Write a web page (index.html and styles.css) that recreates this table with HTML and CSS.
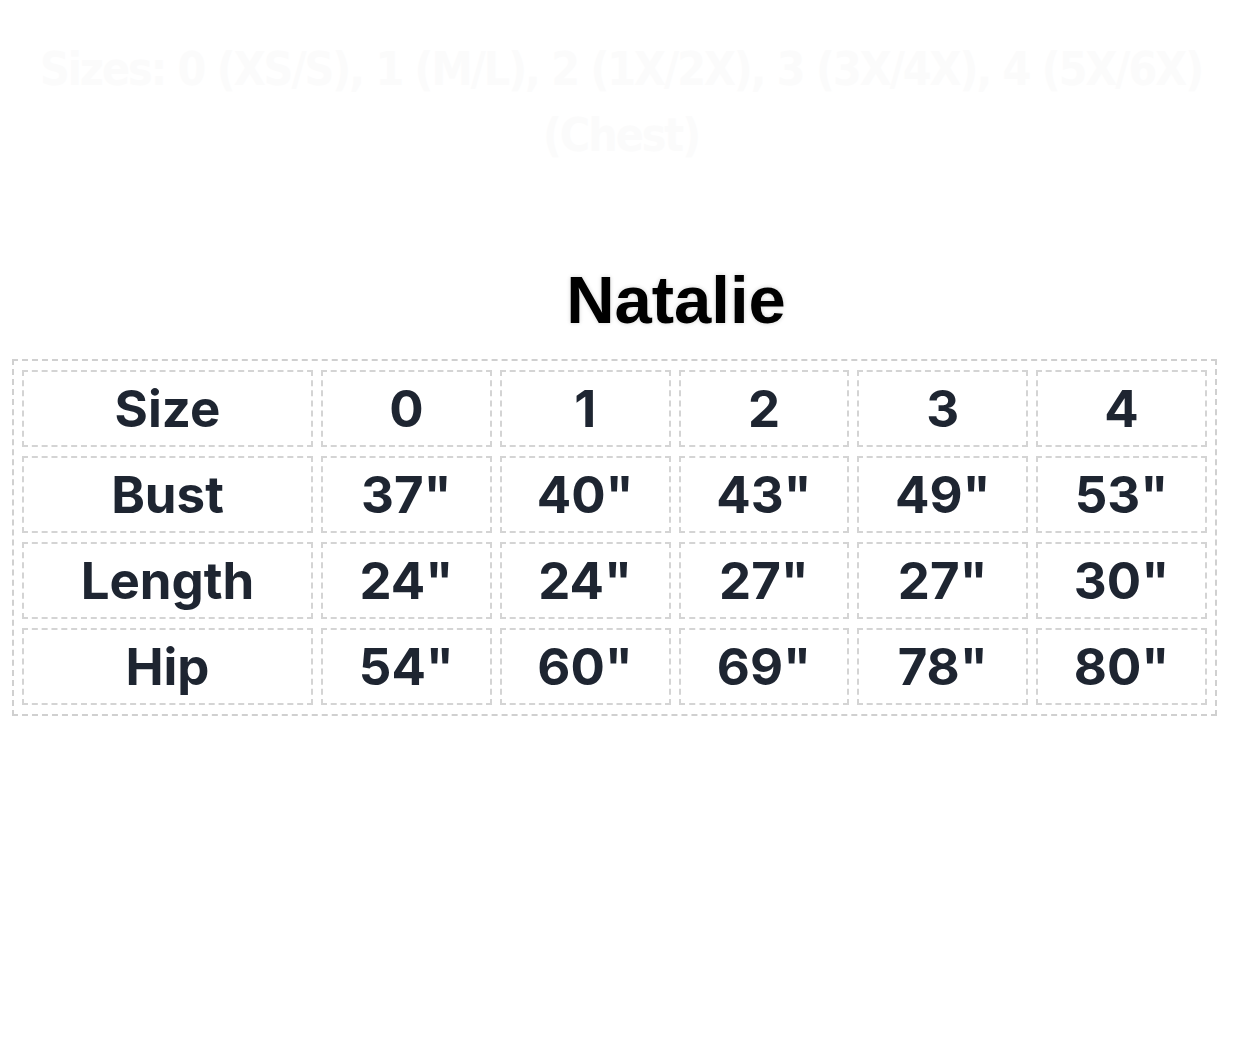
FILE: index.html
```html
<!DOCTYPE html>
<html lang="en">
<head>
<meta charset="utf-8">
<title>Natalie size chart</title>
<link rel="stylesheet" href="styles.css">
</head>
<body>
<div class="page">
  <div class="ghost">
    <div class="ghost-line">Sizes: 0 (XS/S), 1 (M/L), 2 (1X/2X), 3 (3X/4X), 4 (5X/6X)</div>
    <div class="ghost-line ghost-sub">(Chest)</div>
  </div>
  <h1 class="title">Natalie</h1>
  <table class="chart">
    <colgroup>
      <col class="col-label">
      <col><col><col><col><col>
    </colgroup>
    <tbody>
      <tr><td>Size</td><td>0</td><td>1</td><td>2</td><td>3</td><td>4</td></tr>
      <tr><td>Bust</td><td>37"</td><td>40"</td><td>43"</td><td>49"</td><td>53"</td></tr>
      <tr><td>Length</td><td>24"</td><td>24"</td><td>27"</td><td>27"</td><td>30"</td></tr>
      <tr><td>Hip</td><td>54"</td><td>60"</td><td>69"</td><td>78"</td><td>80"</td></tr>
    </tbody>
  </table>
</div>
</body>
</html>
```

FILE: styles.css
```css
html, body {
  margin: 0;
  padding: 0;
  background: #ffffff;
}

.page {
  width: 1242px;
  height: 1038px;
  overflow: hidden;
  font-family: "Liberation Sans", Arial, sans-serif;
}

.ghost {
  padding-top: 36px;
  text-align: center;
  color: #fbfbfb;
  font-family: "DejaVu Sans Condensed", "DejaVu Sans", sans-serif;
  font-weight: bold;
  font-size: 46px;
  line-height: 66px;
  letter-spacing: -2px;
  white-space: nowrap;
}

.ghost-sub {
  font-size: 46px;
}

.title {
  margin: 97px 0 0 0;
  padding-left: 110px;
  text-align: center;
  font-size: 67px;
  line-height: 70px;
  font-weight: bold;
  color: #000000;
  text-shadow: 0 0 4px rgba(0, 0, 0, 0.18);
}

.chart {
  margin: 24px 0 0 12px;
  width: 1205px;
  table-layout: fixed;
  border-collapse: separate;
  border-spacing: 8px 9px;
  border: 2px dashed #d0d0d0;
}

.col-label {
  width: 291px;
}

.chart td {
  height: 73px;
  padding: 0;
  border: 2px dashed #d4d4d4;
  text-align: center;
  vertical-align: middle;
  font-family: Inter, "Liberation Sans", Arial, sans-serif;
  font-size: 51px;
  font-weight: 700;
  color: #1e2531;
}
```
